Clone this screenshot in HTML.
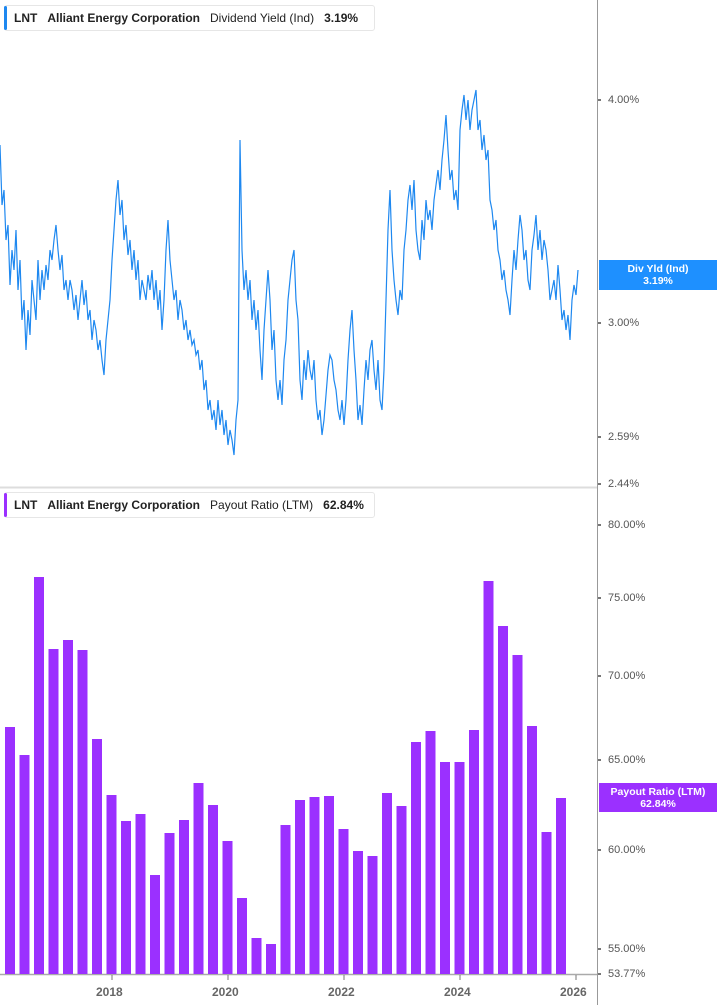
<!DOCTYPE html>
<html><head><meta charset="utf-8"><style>
*{margin:0;padding:0;box-sizing:border-box}
body{width:717px;height:1005px;background:#fff;position:relative;overflow:hidden;font-family:"Liberation Sans",sans-serif}
.hdr{position:absolute;left:4px;height:26px;background:#fff;border:1px solid #e6e6e6;border-radius:3px;font-size:12px;color:#222;line-height:24px;padding-left:9px;white-space:nowrap}
.hdr i{position:absolute;left:-1px;top:0;bottom:0;width:3px;border-radius:2px}
.hdr b{font-weight:bold;margin-right:10px}
.hdr span{margin-right:10px}
.lab{position:absolute;left:608px;font-size:11px;color:#555}
.tag{position:absolute;left:599px;width:118px;color:#fff;font-size:10.5px;font-weight:bold;text-align:center;line-height:12px;padding-top:3px}
.yr{position:absolute;top:985px;font-size:12px;font-weight:bold;color:#666}
</style></head><body>
<svg width="717" height="1005" style="position:absolute;left:0;top:0">
<line x1="0" y1="487.5" x2="597" y2="487.5" stroke="#ddd" stroke-width="2"/>
<line x1="597.5" y1="0" x2="597.5" y2="1005" stroke="#999" stroke-width="1"/>
<line x1="0" y1="974.5" x2="597" y2="974.5" stroke="#aaa" stroke-width="1.5"/>
<g stroke="#777" stroke-width="1">
<line x1="112" y1="975" x2="112" y2="980"/><line x1="228" y1="975" x2="228" y2="980"/><line x1="344" y1="975" x2="344" y2="980"/><line x1="460" y1="975" x2="460" y2="980"/><line x1="576" y1="975" x2="576" y2="980"/>
</g>
<polyline fill="none" stroke="#1e88f0" stroke-width="1.2" points="0,145 2,205 4,190 6,240 8,225 10,285 12,250 14,270 16,230 18,290 20,260 22,320 24,300 26,350 28,310 30,335 32,280 34,300 36,320 38,260 40,300 42,270 44,290 46,265 48,280 50,250 52,260 54,240 56,225 58,250 60,270 62,255 64,290 66,280 68,300 70,280 72,290 74,310 76,295 78,320 80,300 82,280 84,305 86,290 88,320 90,310 92,340 94,320 96,330 98,350 100,340 102,360 104,375 106,340 108,320 110,300 112,260 114,230 116,200 118,180 120,215 122,200 124,240 126,225 128,255 130,240 132,270 134,250 136,280 138,260 140,300 142,280 144,290 146,300 148,275 150,290 152,270 154,300 156,280 158,310 160,290 162,330 164,300 166,250 168,220 170,260 172,280 174,300 176,290 178,320 180,300 182,310 184,330 186,320 188,340 190,330 192,345 194,340 196,355 198,350 200,370 202,360 204,390 206,380 208,410 210,400 212,420 214,410 216,430 218,400 220,425 222,410 224,435 226,420 228,445 230,430 232,440 234,455 236,420 238,400 240,140 242,250 244,290 246,270 248,300 250,280 252,320 254,300 256,330 258,310 260,350 262,380 264,330 266,300 268,270 270,300 272,350 274,330 276,380 278,400 280,380 282,405 284,360 286,340 288,300 290,280 292,260 294,250 296,300 298,320 300,380 302,400 304,360 306,380 308,350 310,370 312,380 314,360 316,400 318,420 320,410 322,435 324,420 326,395 328,370 330,355 332,360 334,380 336,390 338,410 340,420 342,400 344,425 346,400 348,360 350,330 352,310 354,350 356,380 358,420 360,405 362,425 364,390 366,360 368,380 370,350 372,340 374,370 376,390 378,360 380,400 382,410 384,370 386,300 388,230 390,190 392,250 394,280 396,300 398,315 400,290 402,300 404,250 406,230 408,200 410,185 412,210 414,180 416,230 418,250 420,260 422,220 424,240 426,200 428,220 430,210 432,230 434,200 436,185 438,170 440,190 442,160 444,140 446,115 448,150 450,180 452,170 454,200 456,190 458,210 460,130 462,110 464,95 466,120 468,100 470,130 472,110 474,100 476,90 478,130 480,120 482,150 484,135 486,160 488,150 490,200 492,210 494,230 496,220 498,250 500,260 502,280 504,270 506,290 508,300 510,315 512,280 514,250 516,270 518,240 520,215 522,230 524,260 526,250 528,280 530,290 532,250 534,235 536,215 538,250 540,230 542,260 544,240 546,250 548,270 550,300 552,290 554,280 556,300 558,265 560,290 562,320 564,310 566,330 568,315 570,340 572,300 574,285 576,295 578,270"/>
<g fill="#9b30ff">
<rect x="5" y="727" width="10" height="247"/><rect x="19.5" y="755" width="10" height="219"/><rect x="34" y="577" width="10" height="397"/><rect x="48.5" y="649" width="10" height="325"/><rect x="63" y="640" width="10" height="334"/><rect x="77.5" y="650" width="10" height="324"/><rect x="92" y="739" width="10" height="235"/><rect x="106.5" y="795" width="10" height="179"/><rect x="121" y="821" width="10" height="153"/><rect x="135.5" y="814" width="10" height="160"/><rect x="150" y="875" width="10" height="99"/><rect x="164.5" y="833" width="10" height="141"/><rect x="179" y="820" width="10" height="154"/><rect x="193.5" y="783" width="10" height="191"/><rect x="208" y="805" width="10" height="169"/><rect x="222.5" y="841" width="10" height="133"/><rect x="237" y="898" width="10" height="76"/><rect x="251.5" y="938" width="10" height="36"/><rect x="266" y="944" width="10" height="30"/><rect x="280.5" y="825" width="10" height="149"/><rect x="295" y="800" width="10" height="174"/><rect x="309.5" y="797" width="10" height="177"/><rect x="324" y="796" width="10" height="178"/><rect x="338.5" y="829" width="10" height="145"/><rect x="353" y="851" width="10" height="123"/><rect x="367.5" y="856" width="10" height="118"/><rect x="382" y="793" width="10" height="181"/><rect x="396.5" y="806" width="10" height="168"/><rect x="411" y="742" width="10" height="232"/><rect x="425.5" y="731" width="10" height="243"/><rect x="440" y="762" width="10" height="212"/><rect x="454.5" y="762" width="10" height="212"/><rect x="469" y="730" width="10" height="244"/><rect x="483.5" y="581" width="10" height="393"/><rect x="498" y="626" width="10" height="348"/><rect x="512.5" y="655" width="10" height="319"/><rect x="527" y="726" width="10" height="248"/><rect x="541.5" y="832" width="10" height="142"/><rect x="556" y="798" width="10" height="176"/>
</g>
<g fill="#777">
<rect x="598" y="99" width="3" height="2"/><rect x="598" y="322" width="3" height="2"/><rect x="598" y="436" width="3" height="2"/><rect x="598" y="483" width="3" height="2"/><rect x="598" y="524" width="3" height="2"/><rect x="598" y="597" width="3" height="2"/><rect x="598" y="675" width="3" height="2"/><rect x="598" y="759" width="3" height="2"/><rect x="598" y="849" width="3" height="2"/><rect x="598" y="948" width="3" height="2"/><rect x="598" y="973" width="3" height="2"/>
</g>
</svg>
<div class="hdr" style="top:5px;width:371px"><i style="background:#1e88f0"></i><b>LNT</b><b>Alliant Energy Corporation</b><span>Dividend Yield (Ind)</span><b>3.19%</b></div>
<div class="hdr" style="top:492px;width:371px"><i style="background:#9b30ff"></i><b>LNT</b><b>Alliant Energy Corporation</b><span>Payout Ratio (LTM)</span><b>62.84%</b></div>
<div class="lab" style="top:94px">4.00%</div>
<div class="lab" style="top:317px">3.00%</div>
<div class="lab" style="top:431px">2.59%</div>
<div class="lab" style="top:478px">2.44%</div>
<div class="lab" style="top:519px">80.00%</div>
<div class="lab" style="top:592px">75.00%</div>
<div class="lab" style="top:670px">70.00%</div>
<div class="lab" style="top:754px">65.00%</div>
<div class="lab" style="top:844px">60.00%</div>
<div class="lab" style="top:943px">55.00%</div>
<div class="lab" style="top:968px">53.77%</div>
<div class="tag" style="top:260px;height:30px;background:#1e90ff">Div Yld (Ind)<br>3.19%</div>
<div class="tag" style="top:783px;height:29px;background:#9b30ff">Payout Ratio (LTM)<br>62.84%</div>
<div class="yr" style="left:96px">2018</div>
<div class="yr" style="left:212px">2020</div>
<div class="yr" style="left:328px">2022</div>
<div class="yr" style="left:444px">2024</div>
<div class="yr" style="left:560px">2026</div>
</body></html>
